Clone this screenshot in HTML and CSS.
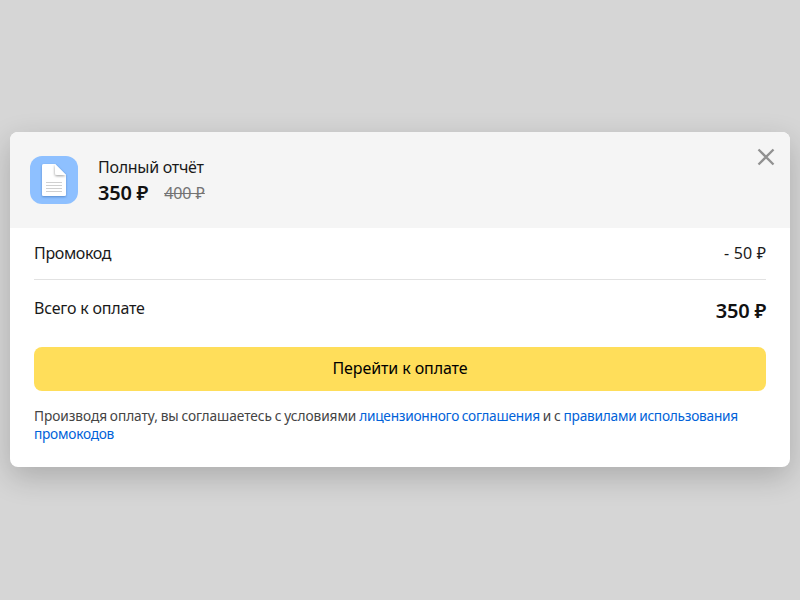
FILE: index.html
```html
<!DOCTYPE html>
<html lang="ru">
<head>
<meta charset="utf-8">
<title>Оплата</title>
<link rel="stylesheet" href="styles.css">
</head>
<body>
<main class="modal">
  <header class="header">
    <svg class="product-icon" viewBox="0 0 48 48">
      <defs>
        <filter id="paper-shadow" x="-20%" y="-20%" width="140%" height="140%"><feDropShadow dx="0" dy="1" stdDeviation="0.9" flood-color="#24579b" flood-opacity=".5"/></filter>
        <filter id="fold-shadow" x="-30%" y="-30%" width="160%" height="160%"><feDropShadow dx="-0.3" dy="1.2" stdDeviation="0.9" flood-color="#000" flood-opacity=".35"/></filter>
      </defs>
      <rect width="48" height="48" rx="12" fill="#8ec0ff"/>
      <path filter="url(#paper-shadow)" d="M13.500 8H25L36 19v19.500a1.500 1.500 0 0 1-1.500 1.500h-21a1.500 1.500 0 0 1-1.500-1.500v-29A1.500 1.500 0 0 1 13.500 8z" fill="#fff"/>
      <path filter="url(#fold-shadow)" d="M25 8v9a2 2 0 0 0 2 2h9z" fill="#fff"/>
      <path d="M16 26.500h16M16 29.500h16M16 32.500h16M16 35.500h16" stroke="#d0d0d0"/>
    </svg>
    <div class="product">
      <div class="name">Полный отчёт</div>
      <div class="prices"><span class="price">350 ₽</span><s class="old">400 ₽</s></div>
    </div>
    <button class="close" aria-label="Закрыть"><svg viewBox="0 0 18 18"><path d="M1.500 1.500l15 15M16.500 1.500l-15 15"/></svg></button>
  </header>
  <section class="content">
    <div class="row promo"><span class="promo-label">Промокод</span><span class="discount">- 50 ₽</span></div>
    <div class="row total"><span class="total-label">Всего к оплате</span><span class="price total-price">350 ₽</span></div>
    <button class="pay">Перейти к оплате</button>
    <p class="legal">Производя оплату, вы соглашаетесь с условиями <a>лицензионного соглашения</a> и с <a>правилами использования промокодов</a></p>
  </section>
</main>
</body>
</html>
```
FILE: styles.css
```css
* { box-sizing: border-box; }
body { margin: 0; height: 600px; padding-top: 132px; background: #d6d6d6; color: #1a1a1a; font: 16px/20px "Noto Sans", sans-serif; overflow: hidden; }
button { padding: 0; border: 0; background: none; font: inherit; color: #000; }
.modal { width: 780px; height: 335px; margin: 0 auto; border-radius: 8px; overflow: hidden; background: #fff; box-shadow: 0 10px 30px rgba(0,0,0,.2); }
.header { height: 96px; padding: 24px 15px 24px 20px; display: flex; background: #f5f5f5; }
.product-icon { width: 48px; height: 48px; margin-right: 20px; }
.name { line-height: 22px; letter-spacing: -.28px; }
.prices { display: flex; gap: 16px; line-height: 30px; }
.price { font-size: 20px; font-weight: 600; letter-spacing: -.25px; color: #111; }
.old { color: #737373; letter-spacing: -.05px; }
.close { width: 18px; height: 18px; margin: -8px 0 0 auto; }
.close svg { display: block; fill: none; stroke: #919191; stroke-width: 2.3; }
.content { padding: 0 24px; }
.row { display: flex; justify-content: space-between; }
.promo { height: 52px; padding-top: 15px; border-bottom: 1px solid #e2e2e2; }
.promo-label { letter-spacing: -.35px; }
.discount { word-spacing: .4px; }
.total { height: 67px; padding-top: 18px; }
.total-label { letter-spacing: -.2px; }
.total-price { line-height: 26px; }
.pay { display: block; width: 100%; height: 44px; padding-bottom: 2px; border-radius: 8px; background: #ffde5a; letter-spacing: -.1px; }
.legal { margin: 16px 0 0; font-size: 13.7px; line-height: 18px; letter-spacing: -.07px; word-spacing: -.6px; color: #444; }
.legal a { letter-spacing: -.25px; color: #0062d9; }
```
